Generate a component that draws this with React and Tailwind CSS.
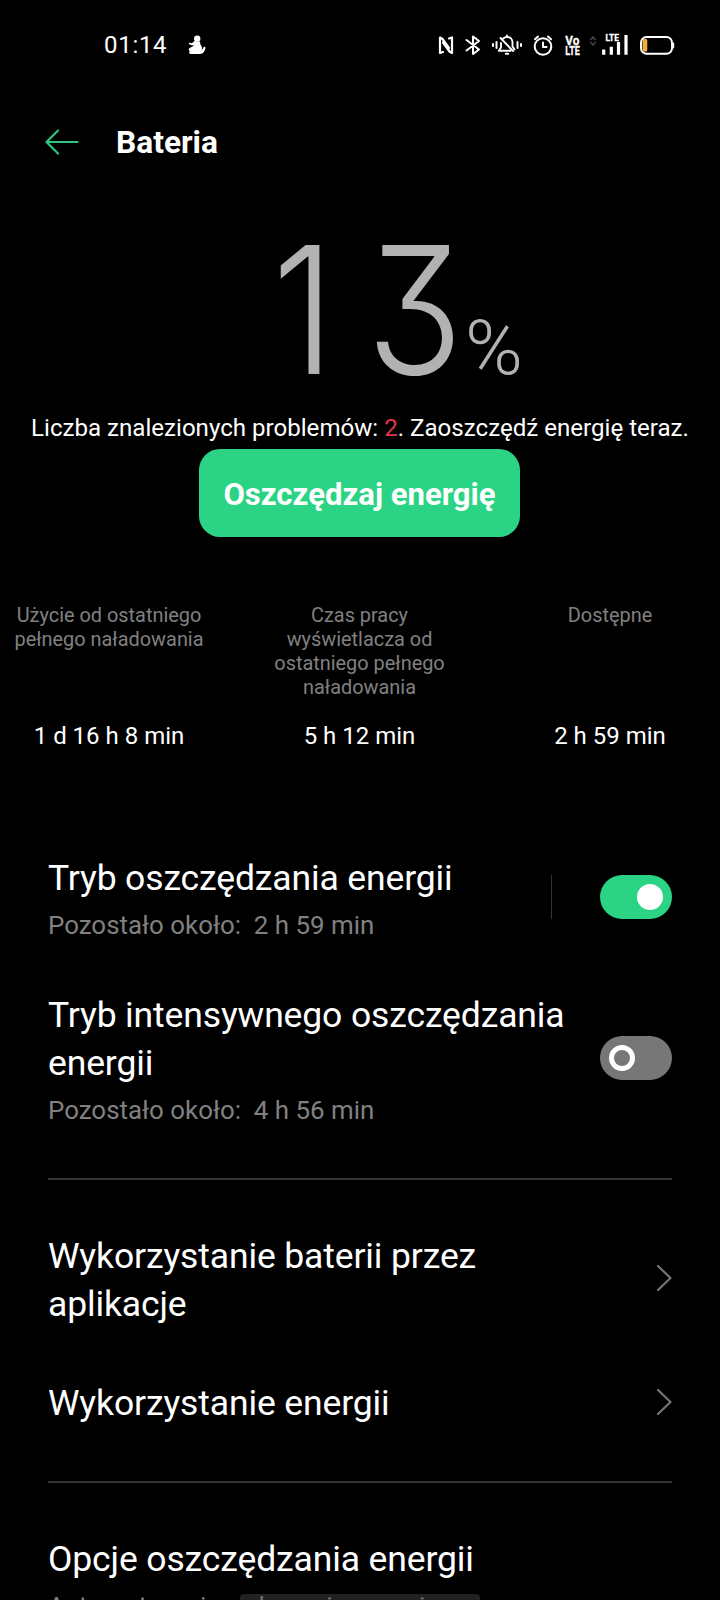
import React from "react";

function StatusIcons() {
  return (
    <svg width="240" height="30" viewBox="436 30 240 30" fill="none" stroke="#fff" strokeWidth="2" strokeLinecap="round" strokeLinejoin="round">
      {/* NFC */}
      <path d="M443 52l-3 1V37.500l2.500 1.500 6.500 9M449 38.500l3-1v15.500l-2.500-1.500-6.500-9" strokeWidth="2.200" />
      {/* Bluetooth */}
      <path d="M466.500 40l12.500 9.500-6 4.500v-17.500l6 4.500-12.500 9.500" strokeWidth="2" />
      {/* Muted bell with vibration */}
      <path d="M493 44v2M496.500 42v6M517.500 42v6M521 44v2" />
      <path d="M501 43v4.500l-2.200 3.200h11.700M500.500 38l12.500 13M503.300 38.500c1-1 2.200-1.500 3.700-1.500 3.500 0 5.500 2.500 5.500 5.500v4l2 3M505.800 53.700h2.400M507 35.500v1" strokeWidth="1.900" />
      {/* Alarm */}
      <circle cx="543" cy="46.500" r="8.300" />
      <path d="M543 42.500v4.500h3.500M535 39.300l3-2.800M551 39.300l-3-2.800" strokeWidth="2" />
      {/* Data arrows */}
      <path d="M590.800 39.500l2.200-2.500 2.200 2.500M590.800 42.500l2.200 2.500 2.200-2.500" stroke="#404040" strokeWidth="1.700" />
      {/* Signal */}
      <path d="M603.700 49.500v5.200M611.300 46.700v8M618.500 42v12.700M626 35v19.700" strokeWidth="3.200" strokeLinecap="butt" />
      {/* Battery */}
      <rect x="641" y="37" width="31" height="16.800" rx="5.500" strokeWidth="1.900" />
      <path d="M673.300 43.500v4" strokeWidth="1.800" />
      <rect x="642.500" y="38.800" width="4.800" height="13" rx="2" fill="#e9b13c" stroke="none" />
      <g fill="#fff" stroke="#fff" strokeWidth="0.300" fontFamily="Roboto, sans-serif" fontWeight="700">
        <text x="565.300" y="44.700" fontSize="12" textLength="14" lengthAdjust="spacingAndGlyphs">Vo</text>
        <text x="565.300" y="54.900" fontSize="12" textLength="14.500" lengthAdjust="spacingAndGlyphs">LTE</text>
        <text x="605.500" y="41.300" fontSize="8.500" textLength="13.500" lengthAdjust="spacingAndGlyphs">LTE</text>
      </g>
    </svg>
  );
}

function StatusBar() {
  return (
    <div className="flex h-[88px] items-center pl-[104px] pt-[2px]">
      <span className="w-[62px] whitespace-nowrap text-[24px] leading-8 tracking-[0.7px]">01:14</span>
      <svg className="ml-[21px]" width="20" height="22" viewBox="0 0 20 22" fill="#fff">
        <circle cx="10.200" cy="4.600" r="3.200" />
        <path d="M7.500 7l5.500.5c.3 1 0 2 .5 3 1.200 1.800 2 3.500 1.300 6l2.200-4 1.500.8c-.3 3.500-2.300 6.700-5.500 6.700H4c-2 0-2.500-2-1-2.800-1.800-1-1.500-3 .5-3.800 1.500-.7 3-1 3.200-2.700l-1.500.8-3.500-1.500.5-1.200 2.800.5z" />
      </svg>
      <div className="ml-[229px] shrink-0"><StatusIcons /></div>
    </div>
  );
}

function Header() {
  return (
    <header className="flex h-[108px] items-center pl-[45px]">
      <svg width="34" height="26" viewBox="0 0 34 26" fill="none" stroke="#2fc480" strokeWidth="2.200" strokeLinecap="round" strokeLinejoin="round">
        <path d="M32.500 13H1.500M13 1.500L1.500 13 13 24.500" />
      </svg>
      <h1 className="ml-[37px] pt-px text-[31.7px] font-bold leading-10">Bateria</h1>
    </header>
  );
}

function Stat({ label, value }) {
  return (
    <div className="flex flex-col items-center text-center">
      <div className="h-24 text-[19.9px] leading-6 text-[#808080]">{label}</div>
      <div className="mt-5 whitespace-nowrap text-[24px] leading-8">{value}</div>
    </div>
  );
}

function Switch({ on }) {
  return (
    <div className={on ? "flex h-11 w-[72px] items-center justify-end rounded-full bg-[#2bd384] px-[9px]" : "flex h-11 w-[72px] items-center rounded-full bg-[#777] px-[9px]"}>
      <div className={on ? "size-[26px] rounded-full bg-white" : "size-[26px] rounded-full border-[5px] border-white"} />
    </div>
  );
}

function Row({ title, sub, children }) {
  return (
    <div className="flex items-center justify-between">
      <div className="w-[530px]">
        <div className="text-[35.5px] leading-12 tracking-[-0.13px]">{title}</div>
        {sub && <div className="mt-[5px] whitespace-pre text-[25.9px] leading-9 text-[#808080]">{sub}</div>}
      </div>
      {children}
    </div>
  );
}

function Chevron() {
  return (
    <svg width="16" height="28" viewBox="1 0 16 28" fill="none" stroke="#757575" strokeWidth="2.200" strokeLinecap="round" strokeLinejoin="round">
      <path d="M3 2l12.500 12L3 26" />
    </svg>
  );
}

export default function App() {
  return (
    <div className="relative h-[1600px] w-[720px] overflow-hidden bg-black font-['Roboto',sans-serif] text-white">
      <StatusBar />
      <Header />
      <div className="flex h-[212px] items-baseline pl-[272px] text-[#b2b2b2]">
        <span className="inline-block w-[193px] origin-left scale-x-90 font-['Inter',sans-serif] text-[177px] font-light leading-[228px] [font-feature-settings:'cv09']"><span className="tracking-[35px]">1</span>3</span>
        <span className="inline-block origin-left scale-x-[1.03] text-[76px] font-light leading-none">%</span>
      </div>
      <div className="flex flex-col items-center pr-px">
        <p className="whitespace-nowrap pl-px text-[24.1px] leading-10">
          Liczba znalezionych problemów: <span className="text-[#e0364c]">2</span>. Zaoszczędź energię teraz.
        </p>
        <button className="mt-px h-[88px] w-[321px] rounded-[21px] bg-[#2bd384] pt-1 text-[31.1px] font-bold">Oszczędzaj energię</button>
      </div>
      <div className="mt-[67px] grid grid-cols-[192px_192px_192px] gap-x-[58.5px] pl-[13px]">
        <Stat label="Użycie od ostatniego pełnego naładowania" value="1 d 16 h 8 min" />
        <Stat label="Czas pracy wyświetlacza od ostatniego pełnego naładowania" value="5 h 12 min" />
        <Stat label="Dostępne" value="2 h 59 min" />
      </div>
      <div className="mt-[102px] px-12">
        <Row title="Tryb oszczędzania energii" sub="Pozostało około:  2 h 59 min">
          <div className="mb-[3px] flex h-11 w-[121px] shrink-0 justify-end border-l border-[#333]">
            <Switch on />
          </div>
        </Row>
        <div className="mt-12">
          <Row title="Tryb intensywnego oszczędzania energii" sub="Pozostało około:  4 h 56 min">
            <div className="mb-[3px]"><Switch /></div>
          </Row>
        </div>
        <div className="mt-[50px] h-0.5 bg-[#333]" />
        <div className="mt-[52px]">
          <Row title="Wykorzystanie baterii przez aplikacje"><div className="mb-[5px]"><Chevron /></div></Row>
        </div>
        <div className="mt-[51px]">
          <Row title="Wykorzystanie energii"><div className="mb-[3px]"><Chevron /></div></Row>
        </div>
        <div className="mt-[54px] h-0.5 bg-[#333]" />
        <div className="mt-[52px]">
          <Row title="Opcje oszczędzania energii" sub="Automatycznie wyłącza i wznawia" />
        </div>
      </div>
      <div className="absolute bottom-0 left-[240px] h-1.5 w-60 rounded-t bg-[#555]/40" />
    </div>
  );
}
